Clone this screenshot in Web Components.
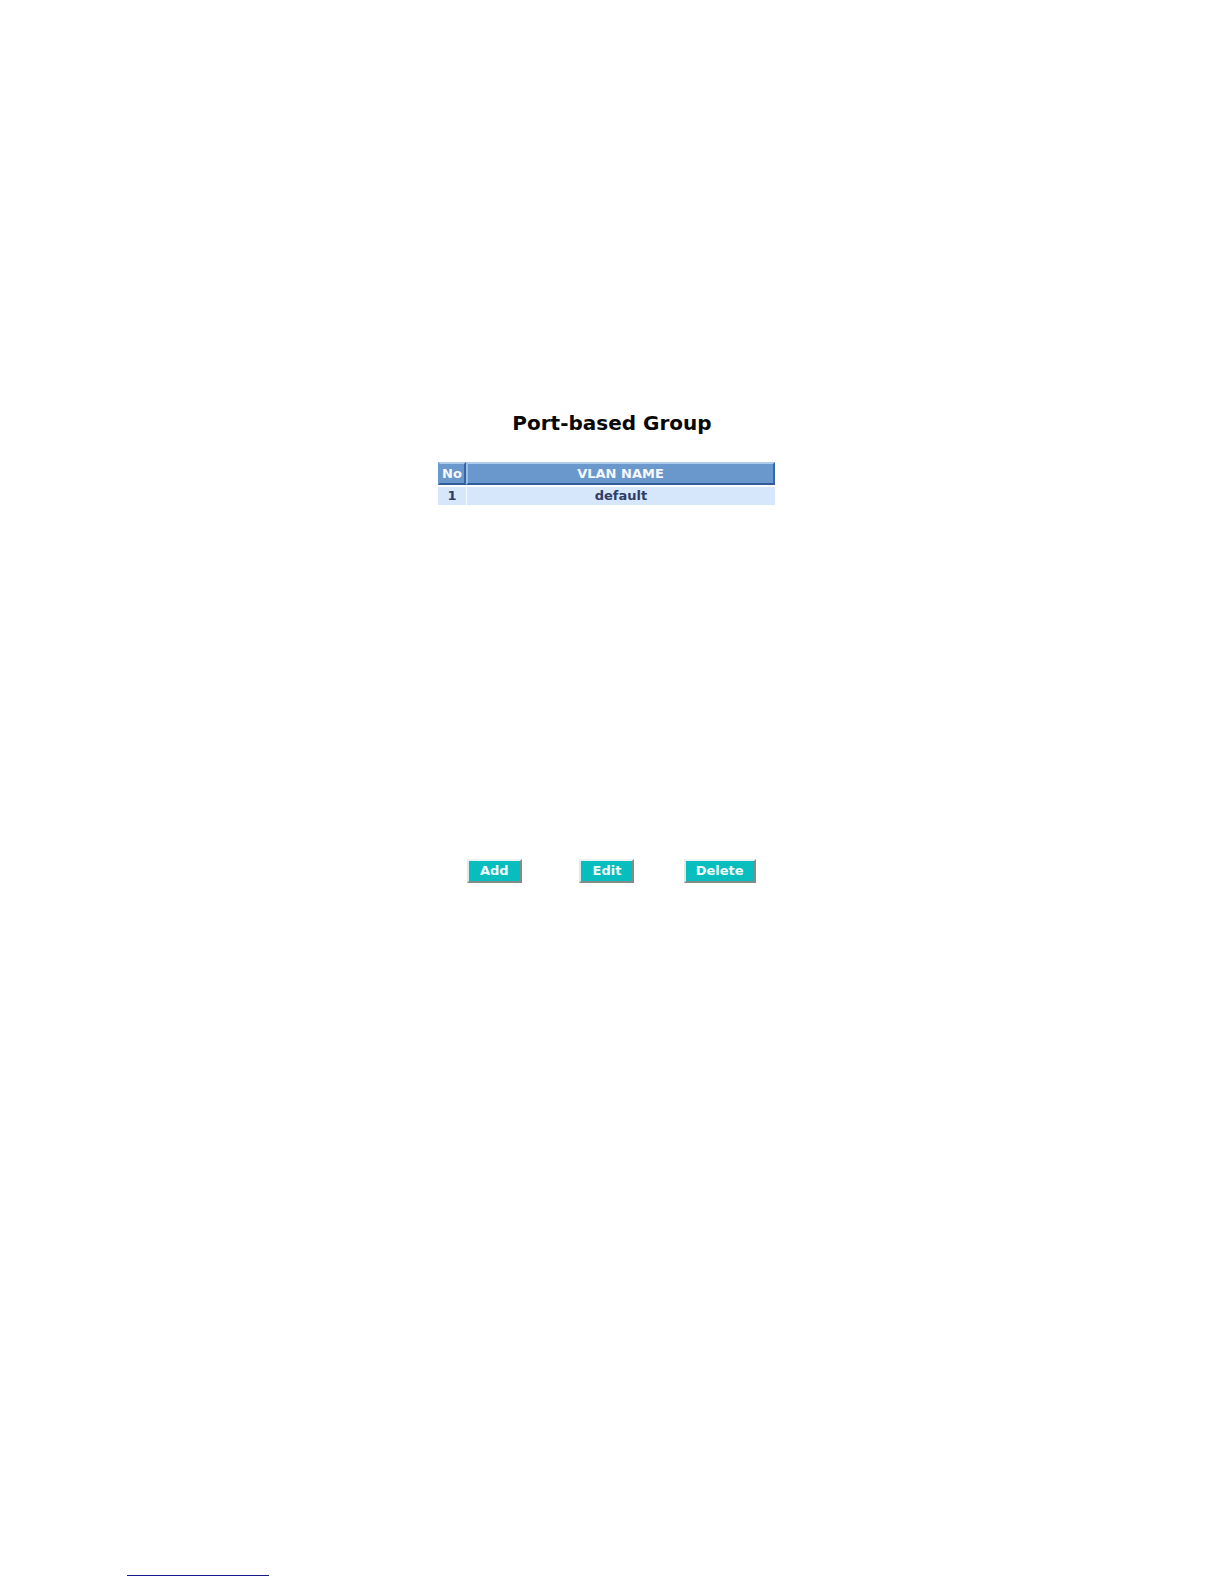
<!DOCTYPE html>
<html lang="en">
<head>
<meta charset="utf-8">
<title>Port-based Group</title>
<style>
    body {
        margin: 0;
        background: #fff;
        font-family: "DejaVu Sans", Verdana, sans-serif;
        font-weight: bold;
    }
</style>
</head>
<body>
<vlan-page>
    <vlan-group heading="Port-based Group">
        <vlan-list></vlan-list>
        <vlan-button slot="actions">Add</vlan-button>
        <vlan-button slot="actions">Edit</vlan-button>
        <vlan-button slot="actions">Delete</vlan-button>
    </vlan-group>
    <foot-rule slot="footer"></foot-rule>
</vlan-page>
<script>
    const attach = (element, html) => {
        const template = document.createElement('template');
        template.innerHTML = html;
        element.attachShadow({mode: 'open'}).appendChild(template.content.cloneNode(true));
    };

    class VlanPage extends HTMLElement {
        constructor() {
            super();
            attach(this, `
    <style>
    :host {
        display: flex;
        flex-direction: column;
        box-sizing: border-box;
        min-height: 100vh;
        padding: 408px 0 8px;
    }
    main {
        flex: 1;
        display: flex;
        justify-content: center;
        align-items: flex-start;
    }
    footer {
        padding: 0 127px;
    }
    </style>
    <main><slot></slot></main>
    <footer><slot name="footer"></slot></footer>
    `);
        }
    }
    customElements.define('vlan-page', VlanPage);

    class VlanGroup extends HTMLElement {
        constructor() {
            super();
            attach(this, `
    <style>
    :host {
        display: block;
        width: 348px;
        max-width: 100%;
    }
    h1 {
        margin: 0;
        font-size: 20px;
        line-height: 30px;
        text-align: center;
        color: #080808;
    }
    .list {
        min-height: 397px;
        padding: 24px 11px 0 0;
    }
    .actions {
        display: grid;
        grid-template-columns: repeat(3, 1fr);
        justify-items: center;
        padding: 0 10px 0 0;
    }
    </style>
    <h1></h1>
    <div class="list"><slot></slot></div>
    <div class="actions"><slot name="actions"></slot></div>
    `);
            this.shadowRoot.querySelector('h1').textContent = this.getAttribute('heading');
        }
    }
    customElements.define('vlan-group', VlanGroup);

    class VlanList extends HTMLElement {
        constructor() {
            super();
            attach(this, `
    <style>
    :host {
        display: block;
    }
    table {
        width: 100%;
        border-collapse: separate;
        border-spacing: 0;
        table-layout: fixed;
        font-size: 13px;
        text-align: center;
    }
    .no {
        width: 28px;
    }
    th, td {
        box-sizing: border-box;
        padding: 0;
    }
    th {
        height: 23px;
        line-height: 19px;
        color: #f4f8ff;
        background: #6b98cc;
        border: 2px solid;
        border-color: #aecbea #3566a8 #305c98 #9dbde2;
    }
    th:first-child {
        border-left-color: #6b98cc;
    }
    td {
        height: 20px;
        line-height: 18px;
        color: #303c68;
        background: #d6e7fc;
        border-top: 2px solid #fff;
    }
    td + td {
        border-left: 1px solid #f4f9ff;
    }
    </style>
    <table>
        <colgroup><col class="no"><col></colgroup>
        <thead><tr><th scope="col">No</th><th scope="col">VLAN NAME</th></tr></thead>
        <tbody><tr><td>1</td><td>default</td></tr></tbody>
    </table>
    `);
        }
    }
    customElements.define('vlan-list', VlanList);

    class VlanButton extends HTMLElement {
        constructor() {
            super();
            attach(this, `
    <style>
    :host {
        display: block;
    }
    button {
        display: block;
        box-sizing: border-box;
        min-width: 55px;
        height: 24px;
        margin: 0;
        padding: 0 10px;
        border: 2px solid;
        border-color: #eaf4f2 #808c88 #808c88 #dcebe8;
        border-radius: 0;
        background: #08bdbd;
        color: #f0ffff;
        font: inherit;
        font-size: 13px;
        line-height: 20px;
    }
    </style>
    <button type="button"><slot></slot></button>
    `);
        }
    }
    customElements.define('vlan-button', VlanButton);

    class FootRule extends HTMLElement {
        constructor() {
            super();
            attach(this, `
    <style>
    :host {
        display: block;
        width: 142px;
        height: 1px;
        background: #18188c;
    }
    </style>
    `);
        }
    }
    customElements.define('foot-rule', FootRule);
</script>
</body>
</html>
